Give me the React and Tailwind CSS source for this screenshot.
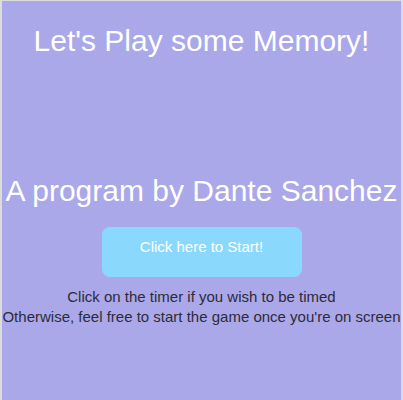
export default function App() {
  return (
    <div className="min-h-[400px] bg-[#dcdcdc] px-[2px] pt-[1px]" style={{ fontFamily: '"Liberation Sans", Arial, sans-serif' }}>
      <div className="min-h-[399px] bg-[#aaa8e9] flex flex-col items-center text-center">
        {/* Title */}
        <h1 className="mt-[23.4px] text-[30px] leading-[34px] font-normal text-white">Let's Play some Memory!</h1>

        {/* Author */}
        <h2 className="mt-[116px] text-[30px] leading-[34px] font-normal text-white whitespace-nowrap">A program by Dante Sanchez</h2>

        {/* Start button */}
        <button className="mt-[18.6px] w-[200px] h-[50px] rounded-lg bg-[#8ad9fd] text-white text-[15px] leading-[17px] flex justify-center pt-[11px]">
          Click here to Start!
        </button>

        {/* Instructions */}
        <div className="mt-[10.3px] text-[15px] leading-[19.5px] text-[#2e2b38] whitespace-nowrap">
          <p>Click on the timer if you wish to be timed</p>
          <p>Otherwise, feel free to start the game once you're on screen</p>
        </div>
      </div>
    </div>
  );
}
